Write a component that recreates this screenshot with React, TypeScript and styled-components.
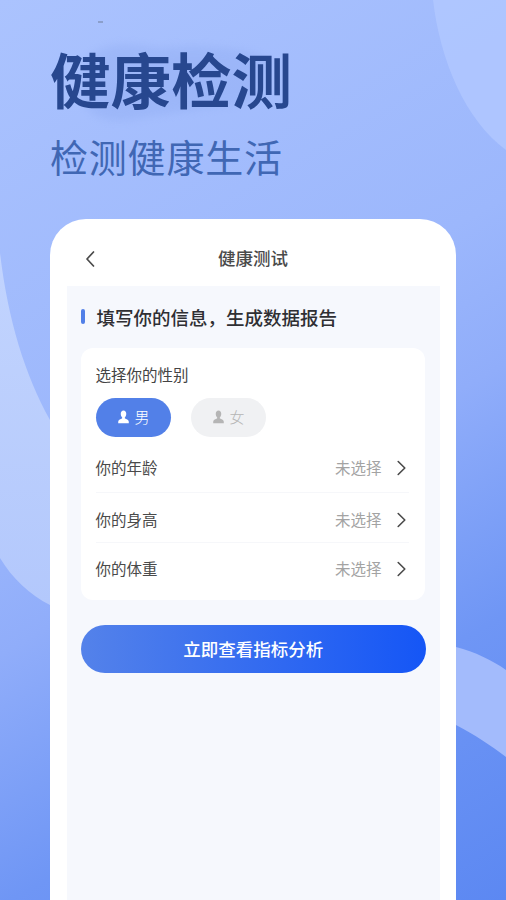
import React from 'react';
import styled, { createGlobalStyle } from 'styled-components';

const GlobalStyle = createGlobalStyle`
  html, body {
    margin: 0;
    padding: 0;
    background: #9db8fb;
  }
  * {
    box-sizing: border-box;
  }
`;

const Page = styled.div`
  position: relative;
  width: 506px;
  height: 900px;
  overflow: hidden;
  padding: 43px 0 0 50px;
  font-family: 'Noto Sans CJK SC', 'Noto Sans', sans-serif;
  background: linear-gradient(150deg, #abc3fe 0%, #9cb7fc 41%, #90adfa 55%, #6f96f5 76%, #5c88f2 100%);
`;

const Backdrop = styled.svg`
  position: absolute;
  left: 0;
  top: 0;
`;

const Hero = styled.div`
  position: relative;
  display: flex;
  flex-direction: column;
`;

const Title = styled.h1`
  margin: 0;
  font-size: 60.5px;
  line-height: 70px;
  font-weight: 700;
  color: #27478f;
`;

const Subtitle = styled.p`
  margin: 19px 0 0;
  font-size: 38px;
  line-height: 48px;
  letter-spacing: 0.8px;
  font-weight: 400;
  color: #4067b4;
`;

const Card = styled.div`
  position: relative;
  width: 406px;
  height: 700px;
  margin-top: 39px;
  border-radius: 36px 36px 0 0;
  background: #ffffff;
  display: flex;
  flex-direction: column;
  align-items: center;
`;

const CardHeader = styled.div`
  position: relative;
  width: 100%;
  height: 67px;
  flex: none;
  display: flex;
  align-items: center;
  justify-content: center;
  padding-top: 10px;
  font-size: 17.5px;
  font-weight: 500;
  color: #4a4a4a;
`;

const BackButton = styled.svg`
  position: absolute;
  left: 35px;
  top: 31px;
`;

const Panel = styled.div`
  width: 373px;
  flex: 1;
  background: #f6f8fd;
  padding: 0 14px;
`;

const SectionTitle = styled.div`
  display: flex;
  align-items: center;
  gap: 12px;
  height: 62px;
  padding-bottom: 1px;
  font-size: 18.5px;
  font-weight: 500;
  color: #2f2f33;
`;

const AccentBar = styled.span`
  width: 4px;
  height: 15px;
  border-radius: 2px;
  background: #5280e8;
`;

const FormCard = styled.div`
  width: 344px;
  height: 252px;
  border-radius: 12px;
  background: #ffffff;
  padding: 15px 16px 0 15px;
`;

const Label = styled.div`
  font-size: 15.5px;
  line-height: 22px;
  color: #444444;
`;

const GenderRow = styled.div`
  display: flex;
  gap: 20px;
  margin-top: 13px;
`;

const GenderPill = styled.div<{ $active?: boolean }>`
  width: 75px;
  height: 39px;
  border-radius: 20px;
  display: flex;
  align-items: center;
  gap: 6px;
  padding: 0 0 2px 22px;
  font-size: 15px;
  font-weight: 300;
  background: ${({ $active }) => ($active ? '#5280e8' : '#f0f1f3')};
  color: ${({ $active }) => ($active ? '#ffffff' : '#b5b5b5')};
`;

const FieldRow = styled.div<{ $divider?: boolean; $height: number; $top: number; $bottom: number }>`
  display: flex;
  align-items: center;
  justify-content: space-between;
  width: 313px;
  height: ${({ $height }) => $height}px;
  padding: ${({ $top }) => $top}px 3px ${({ $bottom }) => $bottom}px 0;
  border-bottom: ${({ $divider }) => ($divider ? '1px solid #f6f7fa' : 'none')};
`;

const FieldName = styled.span`
  font-size: 15.5px;
  color: #4a4a4a;
`;

const FieldValue = styled.span`
  display: flex;
  align-items: center;
  gap: 15px;
  font-size: 15.5px;
  color: #a3a3a3;
`;

const ChevronIcon = styled.svg`
  margin-top: 2px;
`;

const SubmitButton = styled.button`
  display: block;
  width: 345.5px;
  height: 48px;
  margin-top: 25px;
  padding: 0 0 2px;
  border: none;
  border-radius: 24px;
  font-family: inherit;
  font-size: 17.5px;
  font-weight: 500;
  color: #ffffff;
  background: linear-gradient(90deg, #5482ea 0%, #1556f6 100%);
`;

const PersonIcon = ({ color }: { color: string }) => (
  <svg width='11' height='14' viewBox='0 0 12 14' preserveAspectRatio='none'>
    <path
      fill={color}
      d='M6 0.5C4.2 0.5 3 1.9 3 3.8C3 5.4 3.7 6.7 4.5 7.4C4.8 7.7 4.7 8.2 4.3 8.5C3 9.2 0.6 9.6 0.3 11.3L0.2 13.2H11.8L11.7 11.3C11.4 9.6 9 9.2 7.7 8.5C7.3 8.2 7.2 7.7 7.5 7.4C8.3 6.7 9 5.4 9 3.8C9 1.9 7.8 0.5 6 0.5Z'
    />
  </svg>
);

const Chevron = () => (
  <ChevronIcon width='9' height='16' viewBox='0 0 9 16' fill='none'>
    <path d='M1.2 1.5L7.8 8L1.2 14.5' stroke='#4a4a4a' strokeWidth='1.6' strokeLinecap='round' strokeLinejoin='round' />
  </ChevronIcon>
);

const fields = [
  { name: '你的年龄', height: 56, top: 4, bottom: 0, divider: true },
  { name: '你的身高', height: 50, top: 2, bottom: 0, divider: true },
  { name: '你的体重', height: 52, top: 0, bottom: 2, divider: false },
];

export default function App(): JSX.Element {
  return (
    <Page>
      <GlobalStyle />
      <Backdrop width='506' height='900' viewBox='0 0 506 900'>
        <defs>
          <filter id='smudge'>
            <feGaussianBlur stdDeviation='4' />
          </filter>
          <linearGradient id='crescent' x1='0' y1='0' x2='0' y2='1'>
            <stop offset='0' stopColor='#c2d4fe' />
            <stop offset='1' stopColor='#b3c8fc' />
          </linearGradient>
        </defs>
        <path d='M0 253C8 320 25 375 50 420V605C30 595 12 578 0 558Z' fill='url(#crescent)' />
        <path d='M433 0C440 60 465 120 506 150V0Z' fill='#b2c8ff' opacity='0.8' />
        <path d='M456 647C475 652 492 660 506 670V757C490 745 475 735 456 725Z' fill='#a3bbfc' />
        <path d='M85 60C110 38 130 45 160 48C200 44 250 48 268 60L255 100C220 108 170 112 130 120C105 123 85 115 82 95Z' fill='#8fabf2' opacity='0.4' filter='url(#smudge)' />
        <rect x='98' y='21.5' width='5' height='1' fill='#6f7f9a' />
      </Backdrop>
      <Hero>
        <Title>健康检测</Title>
        <Subtitle>检测健康生活</Subtitle>
      </Hero>
      <Card>
        <CardHeader>
          <BackButton width='10' height='18' viewBox='0 0 10 18' fill='none'>
            <path d='M8.5 2L2 9L8.5 16' stroke='#4a4a4a' strokeWidth='1.7' strokeLinecap='round' strokeLinejoin='round' />
          </BackButton>
          健康测试
        </CardHeader>
        <Panel>
          <SectionTitle>
            <AccentBar />
            填写你的信息，生成数据报告
          </SectionTitle>
          <FormCard>
            <Label>选择你的性别</Label>
            <GenderRow>
              <GenderPill $active>
                <PersonIcon color='#ffffff' />男
              </GenderPill>
              <GenderPill>
                <PersonIcon color='#b5b5b5' />女
              </GenderPill>
            </GenderRow>
            {fields.map((field) => (
              <FieldRow key={field.name} $height={field.height} $top={field.top} $bottom={field.bottom} $divider={field.divider}>
                <FieldName>{field.name}</FieldName>
                <FieldValue>
                  未选择
                  <Chevron />
                </FieldValue>
              </FieldRow>
            ))}
          </FormCard>
          <SubmitButton>立即查看指标分析</SubmitButton>
        </Panel>
      </Card>
    </Page>
  );
}
